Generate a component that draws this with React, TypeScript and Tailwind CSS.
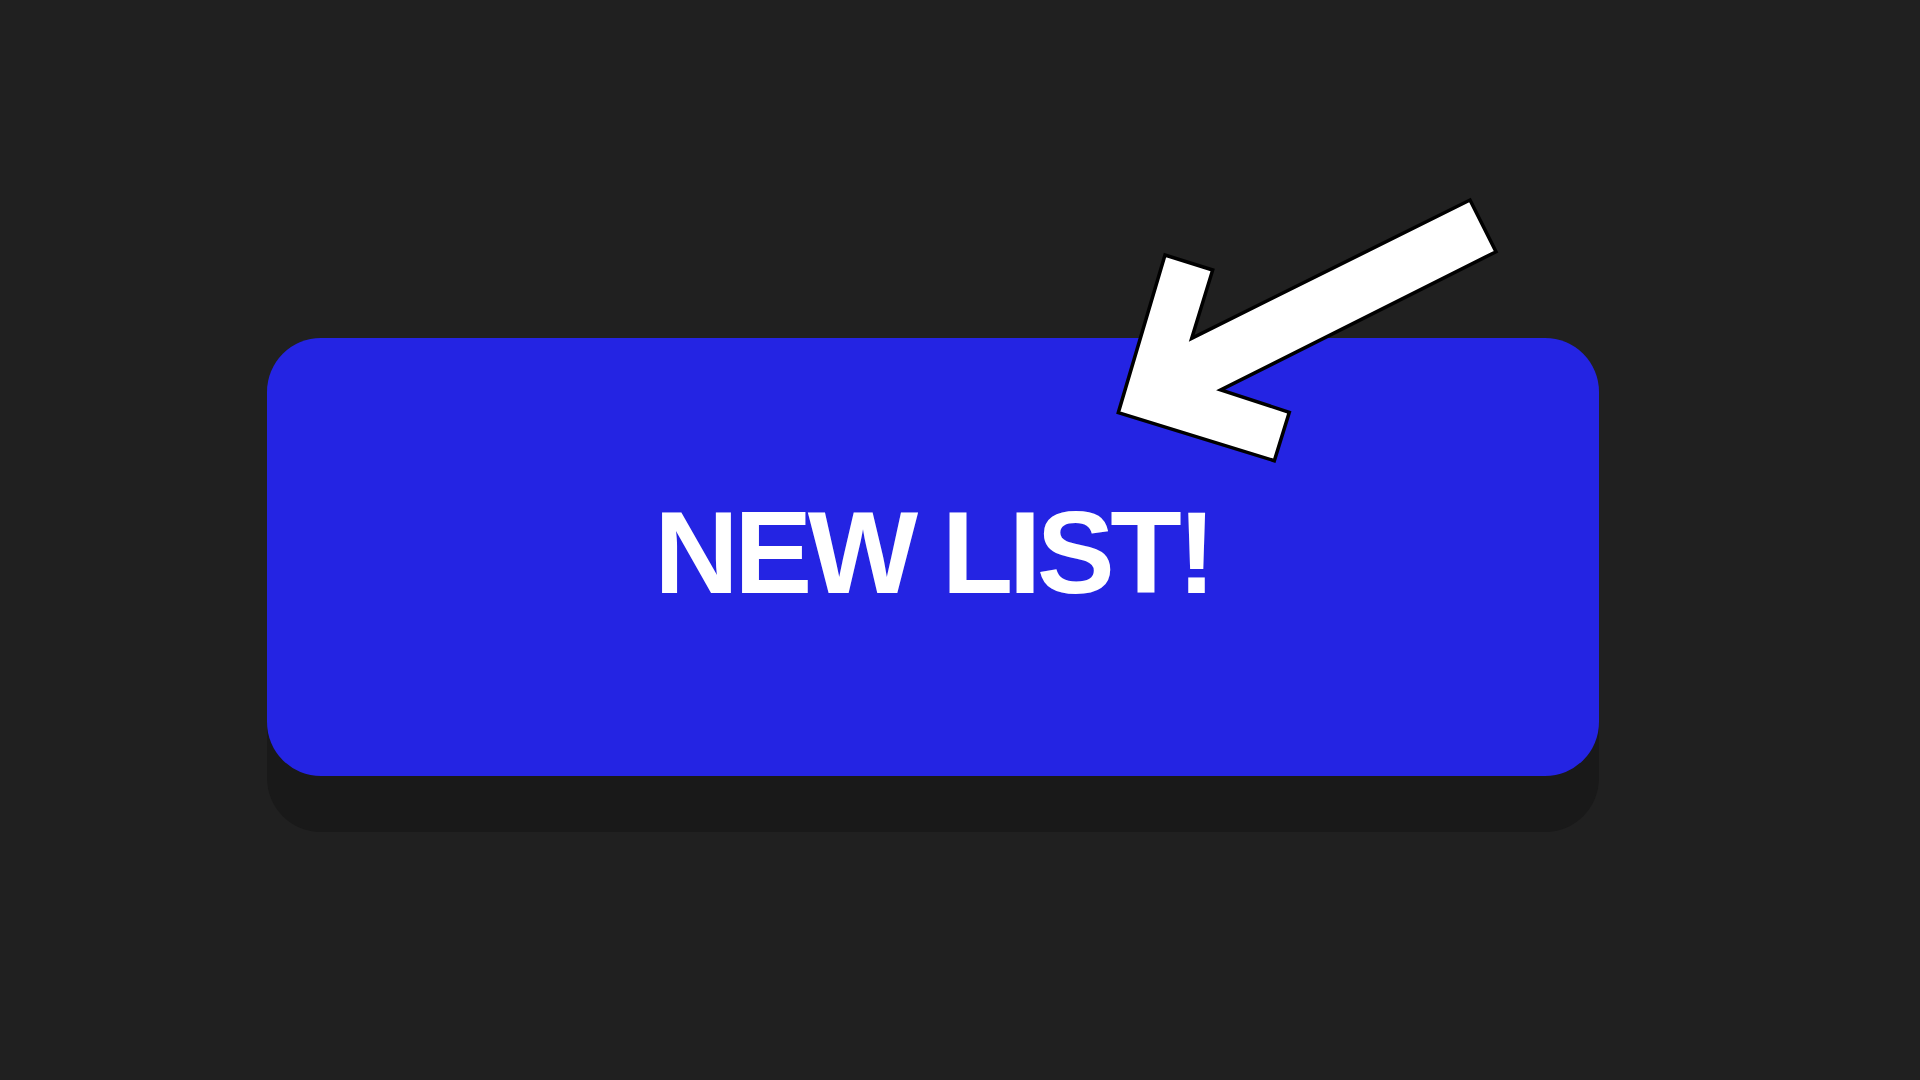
const App = () => {
  return (
    <div className="min-h-screen w-full bg-[#202020] pt-[338px] pl-[267px]">
      <div className="relative w-[1332px]">
        <button className="flex h-[438px] w-[1332px] items-center justify-center rounded-[54px] bg-[#2424e3] pb-[10px] shadow-[0_56px_0_#191919]">
          <span className="font-['Liberation_Sans',Arial,sans-serif] text-[117px] font-bold leading-none tracking-[-4.5px] text-white">
            NEW LIST!
          </span>
        </button>

        {/* Arrow pointing at the button */}
        <svg
          className="absolute left-[843px] top-[-143px]"
          width="400"
          height="275"
          viewBox="0 0 400 275"
        >
          <polygon
            points="360,5 386,56.7 110.7,195 179.3,217.3 164.3,265.7 8.3,217.7 55,60 102.7,75 81.7,143.3"
            fill="#ffffff"
            stroke="#000000"
            strokeWidth="3.5"
            strokeLinejoin="miter"
          />
        </svg>
      </div>
    </div>
  )
}

export default App
